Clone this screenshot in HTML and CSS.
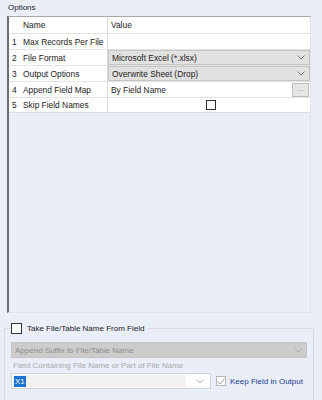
FILE: index.html
```html
<!DOCTYPE html>
<html lang="en">

<head>
    <meta charset="UTF-8">
    <title>Output Options</title>
    <link rel="stylesheet" href="styles.css">
</head>

<body>
    <div class="options-label">Options</div>

    <!-- Property grid -->
    <div class="grid-box">
        <div class="grid">
            <div class="cell idx head"></div>
            <div class="cell name head">Name</div>
            <div class="cell value head">Value</div>

            <div class="cell idx">1</div>
            <div class="cell name">Max Records Per File</div>
            <div class="cell value"></div>

            <div class="cell idx">2</div>
            <div class="cell name">File Format</div>
            <div class="cell value">
                <div class="combo">
                    <span>Microsoft Excel (*.xlsx)</span>
                    <svg class="chev" width="8" height="5" viewBox="0 0 8 5"><path d="M0.5 0.5 L4 4 L7.5 0.5" fill="none" stroke="#777" stroke-width="1"/></svg>
                </div>
            </div>

            <div class="cell idx">3</div>
            <div class="cell name">Output Options</div>
            <div class="cell value">
                <div class="combo">
                    <span>Overwrite Sheet (Drop)</span>
                    <svg class="chev" width="8" height="5" viewBox="0 0 8 5"><path d="M0.5 0.5 L4 4 L7.5 0.5" fill="none" stroke="#777" stroke-width="1"/></svg>
                </div>
            </div>

            <div class="cell idx">4</div>
            <div class="cell name">Append Field Map</div>
            <div class="cell value text-btn">
                <span>By Field Name</span>
                <div class="dots">...</div>
            </div>

            <div class="cell idx">5</div>
            <div class="cell name">Skip Field Names</div>
            <div class="cell value center">
                <div class="box"></div>
            </div>
        </div>
    </div>

    <!-- File name from field -->
    <fieldset class="group">
        <legend class="legend">
            <span class="box"></span>
            <span>Take File/Table Name From Field</span>
        </legend>

        <div class="combo disabled wide">
            <span>Append Suffix to File/Table Name</span>
            <svg class="chev" width="8" height="5" viewBox="0 0 8 5"><path d="M0.5 0.5 L4 4 L7.5 0.5" fill="none" stroke="#a8a8a8" stroke-width="1"/></svg>
        </div>

        <div class="field-label">Field Containing File Name or Part of File Name</div>

        <div class="field-row">
            <div class="field-combo">
                <div class="field-text"><span class="sel">X1</span></div>
                <svg class="chev" width="8" height="5" viewBox="0 0 8 5"><path d="M0.5 0.5 L4 4 L7.5 0.5" fill="none" stroke="#a8a8a8" stroke-width="1"/></svg>
            </div>
            <div class="keep">
                <span class="box checked">
                    <svg width="8" height="7" viewBox="0 0 8 7"><path d="M0.5 3.5 L3 6 L7.5 0.5" fill="none" stroke="#a0a0a0" stroke-width="1"/></svg>
                </span>
                <span>Keep Field in Output</span>
            </div>
        </div>
    </fieldset>
</body>

</html>
```

FILE: styles.css
```css
/* Reset */
* {
    margin: 0;
    padding: 0;
    box-sizing: border-box;
}

body {
    font-family: "Liberation Sans", Arial, sans-serif;
    font-size: 8px;
    color: #222;
    background-color: #e9eef8;
    width: 322px;
    height: 400px;
    overflow: hidden;
}

/* Options label */
.options-label {
    height: 16px;
    padding: 3px 0 0 8px;
    line-height: 10px;
}

/* Grid box */
.grid-box {
    margin: 0 11px 0 7px;
    height: 297px;
    border-left: 2px solid #6e6e6e;
    border-top: 1px solid #a8a8a8;
    border-right: 1px solid #dde2ec;
    border-bottom: 1px solid #dde2ec;
}

.grid {
    display: grid;
    grid-template-columns: 13px 86px 1fr;
    grid-template-rows: 16px 16px 16px 16px 16px 15px;
    background-color: #fff;
    font-size: 8.4px;
    border-bottom: 1px solid #dcdcdc;
}

.cell {
    display: flex;
    align-items: center;
    border-top: 1px solid #e3e3e3;
    white-space: nowrap;
    overflow: hidden;
}

.cell.head {
    border-top: none;
}

.idx {
    padding-left: 3px;
}

.name {
    padding-left: 1px;
    border-right: 1px solid #dcdcdc;
}

.value {
    padding-left: 3px;
}

.value .combo {
    margin-left: -3px;
}

.center {
    justify-content: center;
}

/* Dropdown */
.combo {
    flex: 1;
    height: 100%;
    display: flex;
    align-items: center;
    justify-content: space-between;
    padding: 0 4px 0 3px;
    background-color: #e1e1e1;
    border: 1px solid #c4c4c4;
}

.chev {
    flex: none;
}

.text-btn {
    justify-content: space-between;
    padding-right: 1px;
}

.dots {
    width: 17px;
    height: 14px;
    border: 1px solid #bdbdbd;
    background-color: #e6e6e6;
    color: #8a8a8a;
    font-size: 8px;
    line-height: 10px;
    text-align: center;
}

/* Checkboxes */
.box {
    display: inline-block;
    width: 10px;
    height: 10px;
    border: 1px solid #333;
    background-color: #fff;
}

/* Lower group */
.group {
    margin: 9px 8px 0 4px;
    height: 85px;
    border: 1px solid #d6dbe5;
    border-bottom: none;
    padding: 0 6px 0 6px;
}

.legend {
    display: flex;
    align-items: center;
    gap: 5px;
    padding: 0 3px 0 1px;
    margin-left: -1px;
    font-size: 8px;
    height: 12px;
}

.legend .box {
    width: 11px;
    height: 11px;
}

.combo.disabled {
    background-color: #cccccc;
    border: 1px solid #c4c4c4;
    color: #8c8c8c;
    height: 16px;
    margin-top: 8px;
}

.field-label {
    color: #a9a9a9;
    margin-top: 3px;
    height: 12px;
    padding-left: 2px;
    line-height: 10px;
}

.field-row {
    display: flex;
    align-items: center;
    gap: 5px;
}

.field-combo {
    width: 200px;
    height: 16px;
    display: flex;
    align-items: center;
    border: 1px solid #cfd3da;
    background-color: #fff;
    padding: 1px;
}

.field-text {
    flex: 1;
    height: 100%;
    background-color: #f2f2f2;
    display: flex;
    align-items: center;
    padding-left: 1px;
    margin-right: 10px;
}

.sel {
    background-color: #1a73d1;
    color: #fff;
    padding: 0 1px;
    line-height: 11px;
}

.field-combo .chev {
    margin-right: 5px;
}

.keep {
    display: flex;
    align-items: center;
    gap: 4px;
    color: #213a8f;
}

.box.checked {
    border-color: #b8b8b8;
    display: flex;
    align-items: center;
    justify-content: center;
}
```
